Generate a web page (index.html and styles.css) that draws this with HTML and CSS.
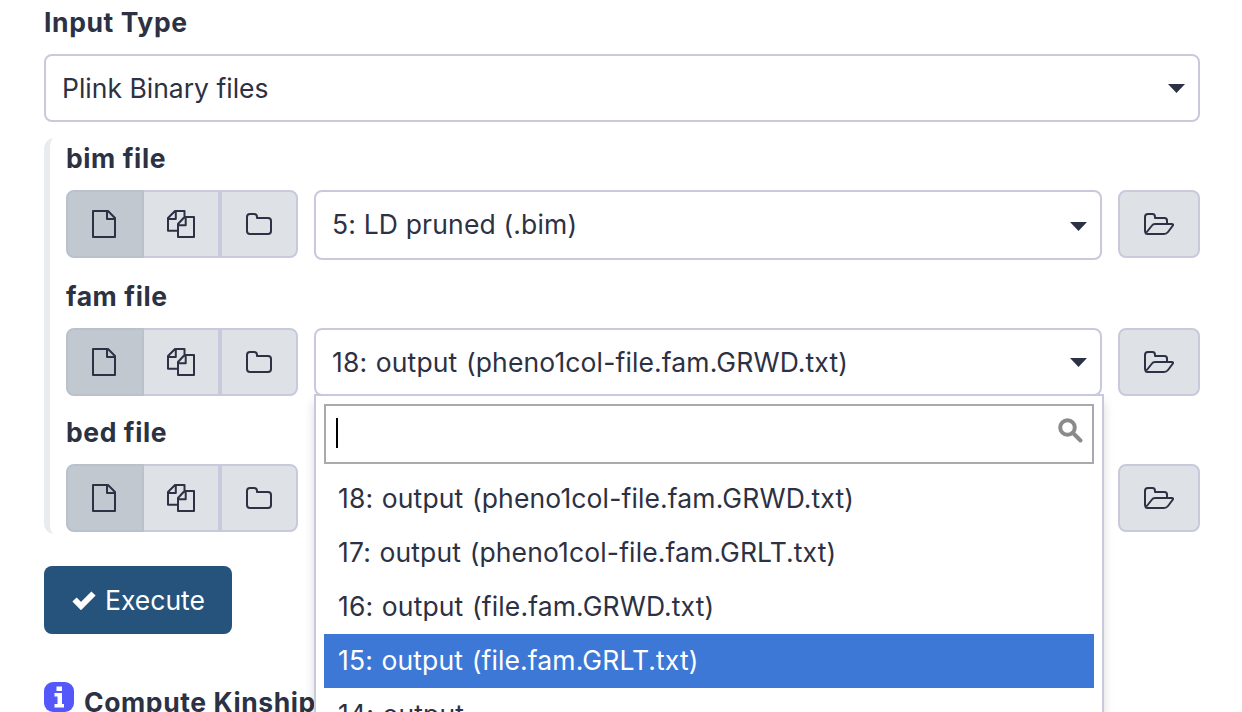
FILE: index.html
```html
<!DOCTYPE html>
<html lang="en">
<head>
<meta charset="utf-8">
<title>Tool form</title>
<link rel="stylesheet" href="styles.css">
</head>
<body>
<svg class="sprite" aria-hidden="true">
  <symbol id="i-file" viewBox="0 0 24 28"><path d="M1 1H16L23 8V27H1ZM15 1V9H23"/></symbol>
  <symbol id="i-copy" viewBox="0 0 28 28"><path d="M11 20.700H1V8L8 1H17.500V7.500M8.800 1V9H1M11 27V14L17.500 7H27V27ZM18.700 7V15.200H11"/></symbol>
  <symbol id="i-folder" viewBox="0 0 26 22"><path d="M1 4Q1 1 4 1H8Q11 1 11 4V5H22Q25 5 25 8V18Q25 21 22 21H4Q1 21 1 18Z"/></symbol>
  <symbol id="i-open" viewBox="0 0 30 22"><path d="M2 20Q1 19.500 1 18V4Q1 1 4 1H8.500Q11 1 11 4V5H20.500Q23 5 23 7.500V11M2 20L8 12.500Q9 11 11 11H27.500Q30 11 28.500 13L24 19Q22.500 21 20 21H3.500Q1 21 2 20"/></symbol>
</svg>
<main class="form">
  <label class="label">Input Type</label>
  <div class="select type-select"><span>Plink Binary files</span><i class="caret"></i></div>
  <section class="group">
    <div class="field">
      <label class="label">bim file</label>
      <div class="row">
        <div class="btns">
          <button class="btn on"><svg class="file"><use href="#i-file"/></svg></button>
          <button class="btn"><svg class="copy"><use href="#i-copy"/></svg></button>
          <button class="btn"><svg class="folder"><use href="#i-folder"/></svg></button>
        </div>
        <div class="select tall"><span>5: LD pruned (.bim)</span><i class="caret"></i></div>
        <button class="browse"><svg class="open"><use href="#i-open"/></svg></button>
      </div>
    </div>
    <div class="field">
      <label class="label">fam file</label>
      <div class="row">
        <div class="btns">
          <button class="btn on"><svg class="file"><use href="#i-file"/></svg></button>
          <button class="btn"><svg class="copy"><use href="#i-copy"/></svg></button>
          <button class="btn"><svg class="folder"><use href="#i-folder"/></svg></button>
        </div>
        <div class="picker">
          <div class="select"><span>18: output (pheno1col-file.fam.GRWD.txt)</span><i class="caret"></i></div>
          <div class="menu">
            <div class="search"><i class="cursor"></i><svg class="glass" viewBox="0 0 26 26"><circle cx="9.500" cy="9.500" r="7.300"/><path d="M15 15L22.500 22.500"/></svg></div>
            <ul class="options">
              <li>18: output (pheno1col-file.fam.GRWD.txt)</li>
              <li>17: output (pheno1col-file.fam.GRLT.txt)</li>
              <li>16: output (file.fam.GRWD.txt)</li>
              <li class="active">15: output (file.fam.GRLT.txt)</li>
              <li>14: output</li>
            </ul>
          </div>
        </div>
        <button class="browse"><svg class="open"><use href="#i-open"/></svg></button>
      </div>
    </div>
    <div class="field">
      <label class="label">bed file</label>
      <div class="row">
        <div class="btns">
          <button class="btn on"><svg class="file"><use href="#i-file"/></svg></button>
          <button class="btn"><svg class="copy"><use href="#i-copy"/></svg></button>
          <button class="btn"><svg class="folder"><use href="#i-folder"/></svg></button>
        </div>
        <div class="select"></div>
        <button class="browse"><svg class="open"><use href="#i-open"/></svg></button>
      </div>
    </div>
  </section>
  <button class="execute"><svg class="check" viewBox="0 0 24 20"><path d="M2.500 9.500L9 16L21.500 3.500"/></svg><span>Execute</span></button>
  <div class="help">
    <svg class="info" viewBox="0 0 30 30"><rect width="30" height="30" rx="9"/><path d="M12.500 4.500h5.500v4.500h-5.500zM10.500 11h7.500v11h2v3.500h-9.500v-3.500h3v-7.500h-3z"/></svg>
    <h2 class="title">Compute Kinship</h2>
  </div>
</main>
</body>
</html>
```
FILE: styles.css
```css
* { box-sizing: border-box; }
html, body { height: 100%; }
body {
  margin: 0;
  overflow: hidden;
  background: #fff;
  color: #2c3143;
  font: 400 26.5px/40px Inter, sans-serif;
}
.sprite { position: absolute; width: 0; height: 0; }
svg { display: block; fill: none; stroke: #2c3143; stroke-width: 2; stroke-linejoin: round; }
button { font: inherit; padding: 0; }
.form { height: 712px; overflow: hidden; padding: 2px 42px 0 44px; }
.label { display: block; height: 40px; font-weight: 700; letter-spacing: .6px; }
.select {
  display: flex;
  align-items: center;
  justify-content: space-between;
  flex: 1;
  height: 68px;
  padding: 0 13px 0 16px;
  border: 2px solid #c8cadc;
  border-radius: 8px;
  background: #fff;
  white-space: nowrap;
}
.type-select { margin-top: 12px; }
.select.tall { height: 70px; }
.select.tall span { margin-bottom: 2px; letter-spacing: .16px; }
.caret {
  width: 17px;
  height: 9px;
  margin-top: 1px;
  background: #2c3143;
  clip-path: polygon(0 0, 100% 0, 50% 100%);
}
.tall .caret { margin-top: 3px; }
.group {
  height: 396px;
  margin-top: 16px;
  padding-left: 16px;
  border-left: 6px solid #e9ecef;
  border-radius: 10px;
}
.field { height: 136px; }
.field:first-child { height: 138px; }
.field .label { height: 52px; }
.row { display: flex; align-items: flex-start; gap: 16px; }
.btns { display: flex; width: 232px; height: 68px; }
.btn, .browse {
  display: flex;
  align-items: center;
  justify-content: center;
  height: 68px;
  border: 2px solid #c8cadc;
  background: #dee1e6;
}
.btn { width: 78px; }
.btn:nth-child(2) { width: 76px; border-left: 0; }
.btn:last-child { border-radius: 0 8px 8px 0; }
.btn.on {
  padding-right: 2px;
  border-color: #b9c2cc;
  border-radius: 8px 0 0 8px;
  background: #c1c8d0;
}
.browse { width: 82px; border-radius: 8px; }
.file { width: 24px; height: 28px; }
.copy { width: 28px; height: 28px; }
.folder { width: 26px; height: 22px; margin-bottom: 1px; }
.open { width: 30px; height: 22px; margin-bottom: 1px; }
.picker { position: relative; display: flex; flex: 1; }
.picker span, .options { letter-spacing: .13px; word-spacing: 1px; }
.menu {
  position: absolute;
  top: 66px;
  left: 0;
  z-index: 2;
  width: 790px;
  height: 400px;
  padding: 8px;
  border: 2px solid #c8cadc;
  background: #fff;
  box-shadow: 0 8px 10px rgba(0, 0, 0, .15);
}
.search {
  display: flex;
  align-items: center;
  justify-content: space-between;
  width: 770px;
  height: 60px;
  padding: 0 8px 0 10px;
  border: 2px solid #aaa;
}
.cursor { width: 2px; height: 30px; margin-bottom: 2px; background: #000; }
.glass { width: 26px; height: 26px; margin-bottom: 6px; stroke: #8a8a88; stroke-width: 4; stroke-linecap: round; }
.options { width: 770px; margin: 8px 0 0; padding: 0; list-style: none; }
.options li { height: 54px; padding-left: 14px; line-height: 52px; white-space: nowrap; }
.options .active { background: #3d78d6; color: #fff; }
.execute {
  display: flex;
  align-items: center;
  gap: 9px;
  width: 188px;
  height: 68px;
  margin-top: 32px;
  padding-left: 28px;
  border: 0;
  border-radius: 8px;
  background: #25537b;
  color: #fff;
}
.check { width: 24px; height: 20px; stroke: #fff; stroke-width: 6; stroke-linejoin: miter; }
.help { display: flex; gap: 10px; margin-top: 48px; }
.info { width: 30px; height: 30px; fill: #5458fb; stroke: none; }
.info path { fill: #fff; }
.title { margin: 0; font-size: 26.5px; line-height: 40px; font-weight: 700; letter-spacing: .6px; white-space: nowrap; }
```
